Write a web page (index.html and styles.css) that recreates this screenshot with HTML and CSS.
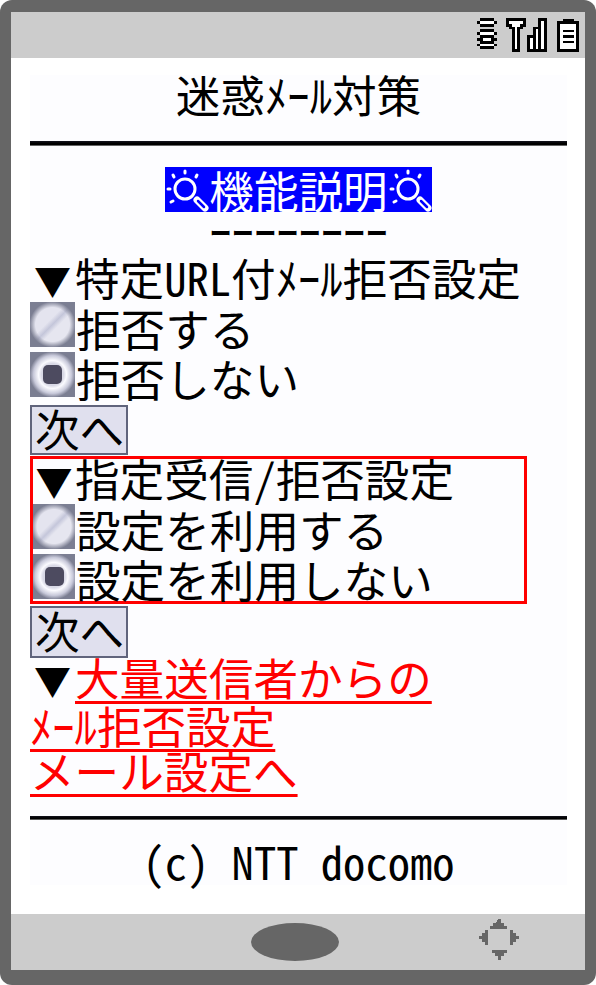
FILE: index.html
```html
<!DOCTYPE html>
<html lang="ja">
<head>
<meta charset="utf-8">
<title>迷惑ﾒｰﾙ対策</title>
<link rel="stylesheet" href="styles.css">
</head>
<body>
<div class="phone">
  <div class="status">
    <svg class="st w7" viewBox="0 0 7 12" shape-rendering="crispEdges">
      <path fill="#000" d="M1 0h5v1h1v1h-1v1h-5v-1h-1v-1h1zM1 4h5v1h1v1h-1v1h1v1h-1v1h1v1h-1v1h-5v-1h-1v-1h1v-1h-1v-1h1v-1h-1v-1h1z"/>
      <path fill="#fff" d="M1 1h5v1h-5zM1 5h5v1h-5zM2 7h3v1h-3zM1 9h5v1h-5z"/>
    </svg>
    <svg class="st w7" viewBox="0 0 7 12" shape-rendering="crispEdges">
      <path fill="#000" d="M0 0h7v3h-1v1h-1v8h-3v-8h-1v-1h-1z"/>
      <path fill="#fff" d="M1 1h5v1h-1v1h-1v8h-1v-8h-1v-1h-1z"/>
    </svg>
    <svg class="st w8 tight" viewBox="0 0 7 12" shape-rendering="crispEdges">
      <path fill="#000" d="M4 0h3v12h-7v-6h2v-3h2z"/>
      <path fill="#fff" d="M5 1h1v10h-1zM3 4h1v7h-1zM1 7h1v4h-1z"/>
    </svg>
    <svg class="st w8" viewBox="0 0 8 12" shape-rendering="crispEdges">
      <path fill="#000" d="M2 0h4v1h2v11h-8v-11h2z"/>
      <path fill="#fff" d="M1 2h6v9h-6z"/>
      <path fill="#000" d="M2 4h4v1h-4zM2 6h4v1h-4zM2 8h4v1h-4z"/>
    </svg>
  </div>

  <div class="screen">
    <div class="content">
      <div class="line center title">迷惑ﾒｰﾙ対策</div>
      <div class="rule rule-top"></div>
      <div class="help-row">
        <div class="help">
          <svg class="lens" viewBox="0 0 44 44"><use href="#lens-shape"/></svg>機能説明<svg class="lens" viewBox="0 0 44 44"><use href="#lens-shape"/></svg>
        </div>
      </div>
      <div class="dashes center">ｰｰｰｰｰｰｰｰ</div>
      <div class="line"><span class="tri">▼</span>特定URL付ﾒｰﾙ拒否設定</div>
      <div class="line radio-row"><span class="radio off"></span>拒否する</div>
      <div class="line radio-row"><span class="radio on"></span>拒否しない</div>
      <button class="next next-a" type="button">次へ</button>

      <div class="box">
        <div class="line first"><span class="tri">▼</span>指定受信/拒否設定</div>
        <div class="line radio-row"><span class="radio off"></span>設定を利用する</div>
        <div class="line radio-row last"><span class="radio on"></span>設定を利用しない</div>
      </div>

      <button class="next next-b" type="button">次へ</button>
      <div class="line link-first"><span class="tri">▼</span><a href="#">大量送信者からの</a></div>
      <div class="line short"><a href="#">ﾒｰﾙ拒否設定</a></div>
      <div class="line short"><a href="#">メール設定へ</a></div>
      <div class="rule rule-bottom"></div>
      <div class="line center footer">(c) NTT docomo</div>
    </div>
  </div>

  <div class="nav">
    <span class="oval"></span>
    <svg class="dpad" viewBox="0 0 40 41" shape-rendering="crispEdges">
      <path fill="#666" d="M19 0h3v4h3v3h3v3h-17v-3h3v-3h3zM9 11v15h-3v-3h-3v-3h-3v-3h3v-3h3v-3zM31 11v15h3v-3h3v-3h3v-3h-3v-3h-3v-3zM11 31h17v3h-3v3h-3v4h-3v-4h-3v-3h-3v-3z"/>
    </svg>
  </div>
</div>

<svg class="defs" aria-hidden="true">
  <defs>
    <g id="lens-shape">
      <circle cx="20" cy="21" r="10" fill="none" stroke="#fff" stroke-width="3"/>
      <path d="M32 32l8 8" stroke="#fff" stroke-width="7" stroke-linecap="round"/>
      <path d="M33 33l6 6" stroke="#0000ff" stroke-width="2.5" stroke-linecap="round"/>
      <g stroke="#fff" stroke-width="3" stroke-linecap="round">
        <path d="M8 7l1 2M20 3v2M32 7l-1 2M3 21h2M6 34l2-1"/>
      </g>
    </g>
  </defs>
</svg>
</body>
</html>
```
FILE: styles.css
```css
* { box-sizing: border-box; }
html, body { margin: 0; padding: 0; background: #fff; }
body { width: 596px; height: 985px; overflow: hidden; }

.phone {
  width: 596px;
  height: 985px;
  padding: 12px 11px 15px;
  background: #666;
  border-radius: 12px;
  display: flex;
  flex-direction: column;
  font-family: "Noto Sans CJK JP", "Noto Sans", sans-serif;
  font-feature-settings: "hwid";
  font-size: 44.6px;
  color: #000;
}

.status {
  height: 46px;
  flex: none;
  background: #ccc;
  display: flex;
  justify-content: flex-end;
  align-items: flex-start;
  padding: 6px 6px 0 0;
  gap: 9px;
}
.st { height: 34px; display: block; }
.w7 { width: 20px; }
.w8 { width: 22px; }
.tight { margin-left: -9px; }

.screen {
  flex: 1;
  background: #fff;
  padding: 17px 18px 29px 19px;
}
.content {
  height: 810px;
  background: #fdfdff;
  display: flex;
  flex-direction: column;
  align-items: flex-start;
}

.line {
  height: 50px;
  flex: none;
  line-height: 42px;
  white-space: nowrap;
  width: 100%;
}
.center { text-align: center; }
.title { line-height: 38px; }
.short { height: 45px; line-height: 33px; }
.link-first { line-height: 38px; }

.tri {
  display: inline-block;
  width: 45px;
  font-size: 37px;
  text-align: center;
  vertical-align: baseline;
}

.rule {
  flex: none;
  width: 100%;
  height: 5px;
  background: linear-gradient(#14141e 0, #000 50%, #000 70%, #999 100%);
}
.rule-top { margin-top: 16px; }
.rule-bottom { margin-top: 18px; height: 4px; }

.help-row {
  width: 100%;
  margin-top: 21px;
  display: flex;
  justify-content: center;
}
.help {
  height: 45px;
  line-height: 45px;
  background: #0000ff;
  color: #fff;
  display: flex;
  align-items: center;
  white-space: nowrap;
}
.lens { width: 44px; height: 44px; display: block; flex: none; }
.defs { position: absolute; width: 0; height: 0; }

.dashes {
  width: 100%;
  height: 44px;
  line-height: 36px;
  white-space: nowrap;
}

.radio-row {
  display: flex;
  align-items: flex-start;
  line-height: 44px;
}
.box .radio-row { line-height: 42px; }
.radio {
  flex: none;
  width: 45px;
  height: 45px;
  margin: -4px 1px 0 0;
  display: flex;
  align-items: center;
  justify-content: center;
  background-color: #7b7e92;
}
.box .radio { width: 42px; }
.box .tri { width: 42px; }
.radio.off {
  background-image:
    radial-gradient(circle at 50% 50%, rgba(123,126,146,0) 0 17px, #7b7e92 23px),
    linear-gradient(135deg, #e4e4ef 0 42%, #c4c6da 50%, #e6e6f0 58% 100%);
}
.radio.on {
  background-image:
    radial-gradient(circle at 50% 50%, #d9d9e6 0 11px, #fbfbff 14px, #c8c9da 19px, #7b7e92 23px);
}
.radio.on::after {
  content: "";
  width: 19px;
  height: 19px;
  border-radius: 5px;
  background: #4d4b60;
}

.next {
  display: block;
  flex: none;
  width: 98px;
  padding: 0 0 4px 3px;
  margin: 0;
  font: inherit;
  font-feature-settings: inherit;
  line-height: 42px;
  color: #000;
  background: #e0e0ee;
  border: 2px solid #60647c;
  border-radius: 0;
  text-align: left;
}
.next-a { height: 50px; margin-top: -1px; }
.next-b { height: 52px; margin-top: 2px; }

.box {
  width: 497px;
  height: 148px;
  margin-top: 1px;
  flex: none;
  border: 3px solid #f00;
}
.box .first { height: 49px; line-height: 38px; }
.box .last { height: 43px; }

a {
  color: #f00;
  text-decoration: underline;
  text-decoration-thickness: 3px;
  text-underline-offset: 5px;
}

.footer { margin-top: 21px; height: 44px; line-height: 40px; }

.nav {
  height: 56px;
  flex: none;
  background: #ccc;
  display: flex;
  align-items: flex-start;
  padding-left: 240px;
}
.oval {
  width: 88px;
  height: 38px;
  margin-top: 9px;
  background: #666;
  border-radius: 50%;
  flex: none;
}
.dpad {
  width: 40px;
  height: 41px;
  margin: 5px 0 0 140px;
  flex: none;
  display: block;
}
```
